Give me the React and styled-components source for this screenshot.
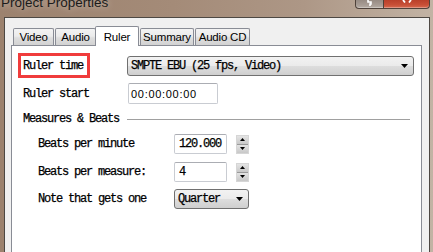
import React from 'react';
import styled, { createGlobalStyle } from 'styled-components';

const Global = createGlobalStyle`
  html, body { margin: 0; padding: 0; }
  body { width: 433px; height: 252px; overflow: hidden; background: #a58c79; }
`;

const Window = styled.div`
  width: 433px;
  height: 252px;
  display: flex;
  flex-direction: column;
  overflow: hidden;
  background: linear-gradient(90deg, #9c826e 0%, #a48b78 40%, #ad9786 70%, #c2b3a4 100%);
`;

const TitleBar = styled.div`
  height: 17px;
  flex: none;
  display: flex;
  align-items: flex-start;
  justify-content: space-between;
`;

const Title = styled.div`
  font-family: "Segoe UI", "Liberation Sans", Arial, sans-serif;
  font-size: 13.5px;
  line-height: 16px;
  color: #1b1b1b;
  margin-top: -5px;
  padding-left: 1px;
  text-shadow: 0 0 7px rgba(255, 255, 255, 0.55);
`;

const CaptionButtons = styled.div`
  display: flex;
  margin-right: 3px;
`;

const CaptionButton = styled.div`
  box-sizing: border-box;
  width: ${p => p.w}px;
  height: 9px;
  border: 1px solid #4f423a;
  border-top: none;
  border-left: ${p => (p.first ? '1px solid #4f423a' : 'none')};
  border-radius: ${p => (p.first ? '0 0 0 4px' : '0 0 4px 0')};
  background: ${p =>
    p.red
      ? 'linear-gradient(#b9402a, #c84f36 60%, #d66a50)'
      : 'linear-gradient(#978b83, #a79c94 60%, #b5aba3)'};
  box-shadow: inset 0 -1px 0 rgba(255, 255, 255, 0.3);
  display: flex;
  justify-content: center;
  align-items: flex-start;
`;

const Client = styled.div`
  flex: 1;
  min-height: 0;
  margin: 0 3px 0 4px;
  border: 1px solid #4d4843;
  border-bottom: none;
  background: #f0f0f0;
  display: flex;
  flex-direction: column;
  padding: 8px 7px 0 6px;
`;

const TabStrip = styled.div`
  display: flex;
  align-items: flex-end;
  height: 19px;
  padding-left: 2px;
  position: relative;
  z-index: 1;
`;

const Tab = styled.div`
  box-sizing: border-box;
  width: ${p => p.w}px;
  height: ${p => (p.active ? 20 : 17)}px;
  margin-left: ${p => p.ml}px;
  margin-bottom: ${p => (p.active ? -1 : 0)}px;
  border: 1px solid #898c95;
  border-bottom: none;
  border-radius: 2px 2px 0 0;
  background: ${p =>
    p.active ? '#ffffff' : 'linear-gradient(#f3f3f3, #ebebeb 45%, #dedede 55%, #d2d2d2)'};
  display: flex;
  align-items: center;
  justify-content: center;
  font-family: "Segoe UI", "Liberation Sans", Arial, sans-serif;
  font-size: 11.5px;
  letter-spacing: -0.2px;
  color: #000;
`;

const Panel = styled.div`
  flex: 1;
  background: #ffffff;
  border: 1px solid #898c95;
  border-bottom: none;
  display: flex;
  flex-direction: column;
  padding: 7px 0 0 6px;
`;

const Row = styled.div`
  display: grid;
  grid-template-columns: ${p => p.labelW}px auto;
  align-items: center;
  height: ${p => p.h}px;
  margin-top: ${p => p.mt || 0}px;
  padding-left: ${p => p.indent || 0}px;
`;

const monoFont = `
  font-family: "Liberation Mono", "Courier New", monospace;
  font-size: 12px;
  letter-spacing: -1.2px;
  color: #000;
  white-space: pre;
  -webkit-text-stroke: 0.25px #000;
`;

const Label = styled.span`
  ${monoFont}
  padding-left: ${p => p.pl || 0}px;
`;

const Highlight = styled.div`
  box-sizing: border-box;
  width: 72px;
  height: 25px;
  border: 3px solid #f03c3c;
  padding-left: 2px;
  display: flex;
  align-items: center;
`;

const Combo = styled.div`
  box-sizing: border-box;
  width: ${p => p.w}px;
  height: 20px;
  border: 1px solid #707070;
  border-radius: 3px;
  background: linear-gradient(#f2f2f2, #ebebeb 48%, #dddddd 52%, #cfcfcf);
  display: flex;
  align-items: center;
  justify-content: space-between;
  padding: 0 5px 0 3px;
  ${monoFont}
`;

const TextBox = styled.div`
  box-sizing: border-box;
  width: ${p => p.w}px;
  height: ${p => p.h}px;
  margin-left: ${p => p.ml || 0}px;
  border: 1px solid #c9ccd2;
  border-top-color: #abadb3;
  border-radius: 2px;
  background: #fff;
  display: flex;
  align-items: center;
  padding-left: ${p => p.pl}px;
  ${p => (p.sans ? '' : monoFont)}
  ${p =>
    p.sans
      ? `font-family: Tahoma, "Liberation Sans", Arial, sans-serif;
         font-size: 11px; letter-spacing: 0.7px; color: #000;`
      : ''}
`;

const SpinField = styled.div`
  display: flex;
  align-items: center;
`;

const Spinner = styled.div`
  box-sizing: border-box;
  width: 13px;
  height: 19px;
  margin-left: 9px;
  display: flex;
  flex-direction: column;
  border: 1px solid #d6d6d6;
  background: #d0d0d0;
`;

const SpinHalf = styled.div`
  flex: 1;
  background: linear-gradient(#e4e4e4, #c8c8c8);
  border-top: ${p => (p.bottom ? '1px solid #9a9a9a' : 'none')};
  display: flex;
  align-items: center;
  justify-content: center;
`;

const SectionHeader = styled.div`
  display: grid;
  grid-template-columns: 109px 283px;
  align-items: center;
  height: 30px;
`;

const Rule = styled.div`
  height: 1px;
  background: #a0a0a0;
`;

const Arrow = ({ up }) => (
  <svg width="7" height="4" viewBox="0 0 7 4">
    <polygon points={up ? '0,4 7,4 3.5,0' : '0,0 7,0 3.5,4'} fill="#000" />
  </svg>
);

const SmallArrow = ({ up }) => (
  <svg width="5" height="3" viewBox="0 0 5 3">
    <polygon points={up ? '0,3 5,3 2.5,0' : '0,0 5,0 2.5,3'} fill="#000" />
  </svg>
);

const NumberField = ({ value }) => (
  <SpinField>
    <TextBox w={53} h={20} pl={4}>{value}</TextBox>
    <Spinner>
      <SpinHalf><SmallArrow up /></SpinHalf>
      <SpinHalf bottom><SmallArrow /></SpinHalf>
    </Spinner>
  </SpinField>
);

export default function App() {
  const tabs = [
    { name: 'Video', w: 41, ml: 0 },
    { name: 'Audio', w: 41, ml: 1 },
    { name: 'Ruler', w: 44, ml: -1, active: true },
    { name: 'Summary', w: 54, ml: 1 },
    { name: 'Audio CD', w: 55, ml: 1 },
  ];
  return (
    <>
      <Global />
      <Window>
        <TitleBar>
          <Title>Project Properties</Title>
          <CaptionButtons>
            <CaptionButton w={29} first>
              <svg width="6" height="7" viewBox="0 0 6 7">
                <path d="M1 0 L1 2 L4 2 L4 4 L3 4 L3 6" stroke="#fff" strokeWidth="1.6" fill="none" />
              </svg>
            </CaptionButton>
            <CaptionButton w={46} red>
              <svg width="10" height="3" viewBox="0 0 10 3">
                <path d="M1 0 L3 2.5 M9 0 L7 2.5" stroke="#fff" strokeWidth="1.8" fill="none" />
              </svg>
            </CaptionButton>
          </CaptionButtons>
        </TitleBar>
        <Client>
          <TabStrip>
            {tabs.map(t => (
              <Tab key={t.name} w={t.w} ml={t.ml} active={t.active}>
                {t.name}
              </Tab>
            ))}
          </TabStrip>
          <Panel>
            <Row labelW={109} h={25}>
              <Highlight>
                <Label>Ruler time</Label>
              </Highlight>
              <Combo w={287}>
                <span>SMPTE EBU (25 fps, Video)</span>
                <Arrow />
              </Combo>
            </Row>
            <Row labelW={109} h={21} mt={5}>
              <Label pl={5}>Ruler start</Label>
              <TextBox w={90} h={21} ml={1} pl={2} sans>00:00:00:00</TextBox>
            </Row>
            <SectionHeader>
              <Label pl={5}>Measures &amp; Beats</Label>
              <Rule />
            </SectionHeader>
            <Row labelW={136} h={20} indent={20}>
              <Label>Beats per minute</Label>
              <NumberField value="120.000" />
            </Row>
            <Row labelW={136} h={20} mt={8} indent={20}>
              <Label>Beats per measure:</Label>
              <NumberField value="4" />
            </Row>
            <Row labelW={136} h={20} mt={7} indent={20}>
              <Label>Note that gets one</Label>
              <Combo w={75}>
                <span>Quarter</span>
                <Arrow />
              </Combo>
            </Row>
          </Panel>
        </Client>
      </Window>
    </>
  );
}
